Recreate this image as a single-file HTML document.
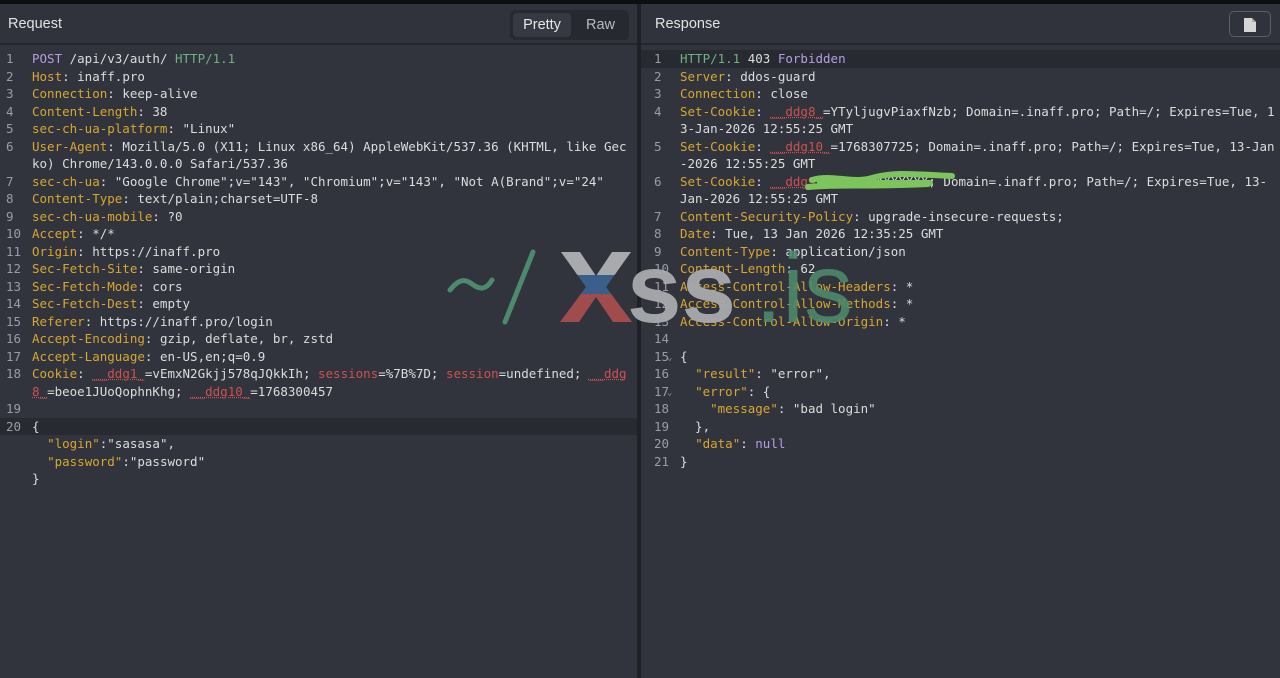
<!DOCTYPE html>
<html><head><meta charset="utf-8"><style>
*{margin:0;padding:0;box-sizing:border-box}
html,body{width:1280px;height:678px;overflow:hidden}
body{background:#0d0e10;position:relative;font-family:"DejaVu Sans Mono","Liberation Mono",monospace}
.pane{position:absolute;top:4px;bottom:0;background:#31343d;overflow:hidden}
#l{left:0;width:637px}
#r{left:641px;width:639px}
.div{position:absolute;left:637px;top:4px;width:4px;bottom:0;background:#1f2127}
.hdr{position:absolute;left:0;right:0;top:0;height:41px;background:#30333b;border-bottom:2px solid #24262c;font-family:"Liberation Sans",sans-serif;font-size:14.5px;color:#e2e2e4}
.hdr .t{position:absolute;left:8px;top:12px}
#r .hdr .t{left:14px}
.tabs{position:absolute;right:8px;top:6px;width:119px;height:30px;background:#272930;border-radius:5px}
.tabs .p{position:absolute;left:3px;top:3px;width:58px;height:24px;background:#363942;border-radius:4px;color:#e6e6e6;text-align:center;line-height:24px}
.tabs .rw{position:absolute;left:76px;top:3px;line-height:24px;color:#b8bac0}
.btn{position:absolute;right:9px;top:7px;width:42px;height:26px;border:1.5px solid #5b5e66;border-radius:5px}
.code{position:absolute;left:0;right:0;top:46px;font-size:12.5px;line-height:17.5px;color:#dcdcdc}
.row{height:17.5px;position:relative}
.n{position:absolute;left:6px;color:#9a9ca3;width:20px}
.c{position:absolute;left:32px;white-space:pre}
#r .n{left:13px}
#r .c{left:39px}
.hl{background:#282a31}
.k{color:#d9a62e}.red{color:#cc5151;text-decoration:underline dotted #cc5151}.rd{color:#cc5151}.g{color:#6fb07f}.pu{color:#b79ce0}
.ar{position:absolute;left:26px;top:2px;color:#8c8e94;font-size:9px}
</style></head><body>
<div class="pane" id="l">
<div class="hdr"><span class="t">Request</span><div class="tabs"><span class="p">Pretty</span><span class="rw">Raw</span></div></div>
<div class="code">
<div class="row"><span class="n">1</span><span class="c"><span class="pu">POST</span> /api/v3/auth/ <span class="g">HTTP/1.1</span></span></div>
<div class="row"><span class="n">2</span><span class="c"><span class="k">Host</span>: inaff.pro</span></div>
<div class="row"><span class="n">3</span><span class="c"><span class="k">Connection</span>: keep-alive</span></div>
<div class="row"><span class="n">4</span><span class="c"><span class="k">Content-Length</span>: 38</span></div>
<div class="row"><span class="n">5</span><span class="c"><span class="k">sec-ch-ua-platform</span>: "Linux"</span></div>
<div class="row"><span class="n">6</span><span class="c"><span class="k">User-Agent</span>: Mozilla/5.0 (X11; Linux x86_64) AppleWebKit/537.36 (KHTML, like Gec</span></div>
<div class="row"><span class="c">ko) Chrome/143.0.0.0 Safari/537.36</span></div>
<div class="row"><span class="n">7</span><span class="c"><span class="k">sec-ch-ua</span>: "Google Chrome";v="143", "Chromium";v="143", "Not A(Brand";v="24"</span></div>
<div class="row"><span class="n">8</span><span class="c"><span class="k">Content-Type</span>: text/plain;charset=UTF-8</span></div>
<div class="row"><span class="n">9</span><span class="c"><span class="k">sec-ch-ua-mobile</span>: ?0</span></div>
<div class="row"><span class="n">10</span><span class="c"><span class="k">Accept</span>: */*</span></div>
<div class="row"><span class="n">11</span><span class="c"><span class="k">Origin</span>: https://inaff.pro</span></div>
<div class="row"><span class="n">12</span><span class="c"><span class="k">Sec-Fetch-Site</span>: same-origin</span></div>
<div class="row"><span class="n">13</span><span class="c"><span class="k">Sec-Fetch-Mode</span>: cors</span></div>
<div class="row"><span class="n">14</span><span class="c"><span class="k">Sec-Fetch-Dest</span>: empty</span></div>
<div class="row"><span class="n">15</span><span class="c"><span class="k">Referer</span>: https://inaff.pro/login</span></div>
<div class="row"><span class="n">16</span><span class="c"><span class="k">Accept-Encoding</span>: gzip, deflate, br, zstd</span></div>
<div class="row"><span class="n">17</span><span class="c"><span class="k">Accept-Language</span>: en-US,en;q=0.9</span></div>
<div class="row"><span class="n">18</span><span class="c"><span class="k">Cookie</span>: <span class="red">__ddg1_</span>=vEmxN2Gkjj578qJQkkIh; <span class="rd">sessions</span>=%7B%7D; <span class="rd">session</span>=undefined; <span class="red">__ddg</span></span></div>
<div class="row"><span class="c"><span class="red">8_</span>=beoe1JUoQophnKhg; <span class="red">__ddg10_</span>=1768300457</span></div>
<div class="row"><span class="n">19</span></div>
<div class="row hl"><span class="n">20</span><span class="c">{</span></div>
<div class="row"><span class="c">  <span class="k">"login"</span>:"sasasa",</span></div>
<div class="row"><span class="c">  <span class="k">"password"</span>:"password"</span></div>
<div class="row"><span class="c">}</span></div>
</div>
</div>
<div class="div"></div>
<div class="pane" id="r">
<div class="hdr"><span class="t">Response</span><div class="btn"><svg width="42" height="26" style="position:absolute;left:-1.5px;top:-1.5px"><path d="M15 7h8l4 4v10h-12z" fill="#d6d6d8"/><path d="M23 7v4h4" fill="#aaa"/></svg></div></div>
<div class="code">
<div class="row hl"><span class="n">1</span><span class="c"><span class="g">HTTP/1.1</span> 403 <span class="pu">Forbidden</span></span></div>
<div class="row"><span class="n">2</span><span class="c"><span class="k">Server</span>: ddos-guard</span></div>
<div class="row"><span class="n">3</span><span class="c"><span class="k">Connection</span>: close</span></div>
<div class="row"><span class="n">4</span><span class="c"><span class="k">Set-Cookie</span>: <span class="red">__ddg8_</span>=YTyljugvPiaxfNzb; Domain=.inaff.pro; Path=/; Expires=Tue, 1</span></div>
<div class="row"><span class="c">3-Jan-2026 12:55:25 GMT</span></div>
<div class="row"><span class="n">5</span><span class="c"><span class="k">Set-Cookie</span>: <span class="red">__ddg10_</span>=1768307725; Domain=.inaff.pro; Path=/; Expires=Tue, 13-Jan</span></div>
<div class="row"><span class="c">-2026 12:55:25 GMT</span></div>
<div class="row"><span class="n">6</span><span class="c"><span class="k">Set-Cookie</span>: <span class="red">__ddg9_</span>=XXXXXXXXXXXXX; Domain=.inaff.pro; Path=/; Expires=Tue, 13-</span></div>
<div class="row"><span class="c">Jan-2026 12:55:25 GMT</span></div>
<div class="row"><span class="n">7</span><span class="c"><span class="k">Content-Security-Policy</span>: upgrade-insecure-requests;</span></div>
<div class="row"><span class="n">8</span><span class="c"><span class="k">Date</span>: Tue, 13 Jan 2026 12:35:25 GMT</span></div>
<div class="row"><span class="n">9</span><span class="c"><span class="k">Content-Type</span>: application/json</span></div>
<div class="row"><span class="n">10</span><span class="c"><span class="k">Content-Length</span>: 62</span></div>
<div class="row"><span class="n">11</span><span class="c"><span class="k">Access-Control-Allow-Headers</span>: *</span></div>
<div class="row"><span class="n">12</span><span class="c"><span class="k">Access-Control-Allow-Methods</span>: *</span></div>
<div class="row"><span class="n">13</span><span class="c"><span class="k">Access-Control-Allow-Origin</span>: *</span></div>
<div class="row"><span class="n">14</span></div>
<div class="row"><span class="n">15</span><span class="ar">⌄</span><span class="c">{</span></div>
<div class="row"><span class="n">16</span><span class="c">  <span class="k">"result"</span>: "error",</span></div>
<div class="row"><span class="n">17</span><span class="ar">⌄</span><span class="c">  <span class="k">"error"</span>: {</span></div>
<div class="row"><span class="n">18</span><span class="c">    <span class="k">"message"</span>: "bad login"</span></div>
<div class="row"><span class="n">19</span><span class="c">  },</span></div>
<div class="row"><span class="n">20</span><span class="c">  <span class="k">"data"</span>: <span class="pu">null</span></span></div>
<div class="row"><span class="n">21</span><span class="c">}</span></div>
</div>
</div>
<svg width="1280" height="678" style="position:absolute;left:0;top:0;pointer-events:none">
<path d="M812 180c20-6 40 4 60-2 20-6 40-4 80-2M808 187c30-3 60 0 120-3M820 183h110" stroke="#7cc45c" stroke-width="6" fill="none" stroke-linecap="round"/>
<defs><linearGradient id="xg" x1="0" y1="252" x2="0" y2="322" gradientUnits="userSpaceOnUse">
<stop offset="0.33" stop-color="#a9aaae"/><stop offset="0.33" stop-color="#3a5f8a"/><stop offset="0.6" stop-color="#3a5f8a"/><stop offset="0.6" stop-color="#a14c4c"/></linearGradient></defs>
<path d="M450 290c8-10 14-12 22-6s14 6 20-4" stroke="#4d8a6b" stroke-width="5" fill="none" stroke-linecap="round"/>
<path d="M533 252L505 322" stroke="#4d8a6b" stroke-width="5" stroke-linecap="round"/>
<path d="M561 252h19l16 24 16-24h19l-25 35 26 35h-19l-17-25-17 25h-19l26-35z" fill="url(#xg)"/>
<text x="627" y="322" font-family="Liberation Sans,sans-serif" font-weight="bold" font-size="98" fill="#a9aaae" opacity="0.95">ss</text>
<text x="755" y="322" font-family="Liberation Sans,sans-serif" font-size="98" fill="#4d8a6b" opacity="0.9">.is</text>
</svg>
</body></html>
